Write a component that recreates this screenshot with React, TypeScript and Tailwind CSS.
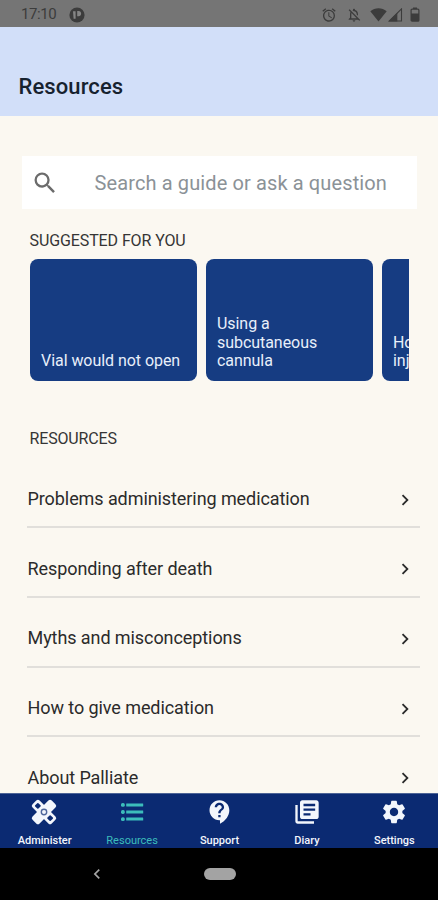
import {
  MdAccessAlarm,
  MdChevronLeft,
  MdChevronRight,
  MdContactSupport,
  MdLibraryBooks,
  MdOutlineNotificationsOff,
  MdSearch,
  MdSettings,
} from "react-icons/md";

const resources = [
  "Problems administering medication",
  "Responding after death",
  "Myths and misconceptions",
  "How to give medication",
  "About Palliate",
];

const suggestions = ["Vial would not open", "Using a subcutaneous cannula", "How to give an injection"];

function PlasterIcon({ size }: { size: number }) {
  return (
    <svg width={size} height={size} viewBox="0 0 28 28" className="-ml-[2px]">
      <g transform="rotate(45 14 14)" fill="currentColor">
        <rect x="0.4" y="9" width="27.2" height="10" rx="2.4" />
        <rect x="9" y="0.4" width="10" height="27.2" rx="2.4" />
        <rect x="3" y="11.7" width="4.6" height="4.6" rx="0.8" fill="#0b2a72" />
        <rect x="20.4" y="11.7" width="4.6" height="4.6" rx="0.8" fill="#0b2a72" />
      </g>
      <circle cx="14" cy="14" r="2.7" fill="none" stroke="#4f679c" strokeWidth="1.4" />
    </svg>
  );
}

function ListIcon({ size }: { size: number }) {
  return (
    <svg width={size} height={size} viewBox="0 0 28 28" fill="currentColor">
      {[5.4, 12.5, 19.6].map((y) => (
        <g key={y}>
          <rect x="3" y={y - 0.4} width="3.8" height="3.8" rx="1.6" />
          <rect x="8.2" y={y} width="17" height="3" rx="0.3" />
        </g>
      ))}
    </svg>
  );
}

const tabs = [
  { label: "Administer", Icon: PlasterIcon, active: false },
  { label: "Resources", Icon: ListIcon, active: true },
  { label: "Support", Icon: MdContactSupport, active: false },
  { label: "Diary", Icon: MdLibraryBooks, active: false },
  { label: "Settings", Icon: MdSettings, active: false },
];

function StatusBar() {
  return (
    <div className="flex h-[27px] shrink-0 items-center bg-[#757575] pl-[21px] pr-[18px] pt-[2px] text-[#3c3c3c]">
      <span className="w-[48px] text-[15px] leading-none tracking-[-0.4px]">17:10</span>
      <svg width="16" height="16" viewBox="0 0 16 16">
        <circle cx="8" cy="8" r="7.6" fill="currentColor" />
        <path d="M4 4.2h2.6v7.6H4.6zM8.2 4v5.2h1.4c3.4 0 3.4-5.2 0-5.2z" fill="#858585" />
      </svg>
      <div className="ml-auto flex items-center">
        <MdAccessAlarm size={16} />
        <MdOutlineNotificationsOff size={16} className="ml-[9px]" />
        <svg className="ml-[8px]" width="17" height="14" viewBox="0 0 17 14">
          <path d="M0.3 3.3C5-.7 12-.7 16.7 3.3L8.5 13.5z" fill="currentColor" />
        </svg>
        <svg className="ml-[1px]" width="15" height="14" viewBox="0 0 15 14">
          <path d="M1.3 13L13.5 .9V13z" fill="none" stroke="currentColor" strokeWidth="1.1" />
          <path d="M.5 13.5L9.3 4.7v8.8z" fill="currentColor" />
        </svg>
        <svg className="ml-[7px]" width="10" height="15" viewBox="0 0 10 15" fill="currentColor">
          <path d="M3 .5h4v1.6h-4z" />
          <rect x="1.1" y="2.2" width="7.8" height="12" rx="1" fill="none" stroke="currentColor" strokeWidth="1.2" />
          <path d="M1 6.5h8v7.5H1z" />
        </svg>
      </div>
    </div>
  );
}

export default function App() {
  return (
    <div className="flex h-[900px] w-[438px] flex-col overflow-hidden bg-[#fbf8f1] font-['Roboto',sans-serif]">
      <StatusBar />
      <header className="flex h-[89px] shrink-0 items-end bg-[#d2dff9] pb-[16px] pl-[18.5px]">
        <h1 className="text-[22px] font-medium leading-[26px] tracking-[0.1px] text-[#17222f]">Resources</h1>
      </header>

      <main className="flex min-h-0 flex-1 flex-col overflow-hidden">
        <div className="ml-[22px] mt-[40px] flex h-[53px] w-[395px] shrink-0 items-center bg-white pl-[8.5px]">
          <MdSearch size={28} className="text-[#6b6b6b]" />
          <span className="ml-[36px] whitespace-nowrap text-[20px] leading-6 tracking-[0.12px] text-[#8b9297]">
            Search a guide or ask a question
          </span>
        </div>

        <h2 className="ml-[29.5px] mt-[21.5px] shrink-0 text-[16px] leading-5 tracking-[-0.1px] text-[#353535]">
          SUGGESTED FOR YOU
        </h2>
        <div className="ml-[30px] mt-[8.5px] flex h-[122px] w-[379px] shrink-0 gap-[9px] overflow-hidden">
          {suggestions.map((title) => (
            <div
              key={title}
              className="flex w-[167px] shrink-0 items-end rounded-lg bg-[#163c82] px-[11px] pb-[10px] text-[16px] leading-[18.6px] tracking-[-0.05px] text-[#e8effa]"
            >
              {title}
            </div>
          ))}
        </div>

        <h2 className="ml-[29.5px] mt-[47.5px] shrink-0 text-[16px] leading-5 tracking-[-0.15px] text-[#353535]">
          RESOURCES
        </h2>
        <ul className="ml-[27px] mt-[10px] w-[393px] shrink-0">
          {resources.map((title) => (
            <li
              key={title}
              className="flex h-[69.7px] items-center justify-between border-b-2 border-[#e1dfdb] pr-[4px] pt-[12.5px] text-[18px] text-[#2b2b2b]"
            >
              <span className="pl-[0.5px] tracking-[-0.08px]">{title}</span>
              <MdChevronRight size={22} className="mt-[2px]" />
            </li>
          ))}
        </ul>
      </main>

      <nav className="flex h-[55px] shrink-0 border-t border-[#4d6496] bg-[#0b2a72] pl-[1px]">
        {tabs.map(({ label, Icon, active }) => (
          <div
            key={label}
            className={`flex flex-1 flex-col items-center pt-[4px] ${
              active ? "font-normal text-[#3cbdbb]" : "font-medium text-[#f3f6fc]"
            }`}
          >
            <Icon size={28} />
            <span className="mt-[7.5px] text-[11px] leading-[14px]">{label}</span>
          </div>
        ))}
      </nav>
      <div className="flex h-[52px] shrink-0 items-center bg-black pl-[87px] text-[#a5a5a5]">
        <MdChevronLeft size={20} />
        <div className="ml-[97px] h-[12px] w-[32px] rounded-full bg-[#a3a3a3]" />
      </div>
    </div>
  );
}
